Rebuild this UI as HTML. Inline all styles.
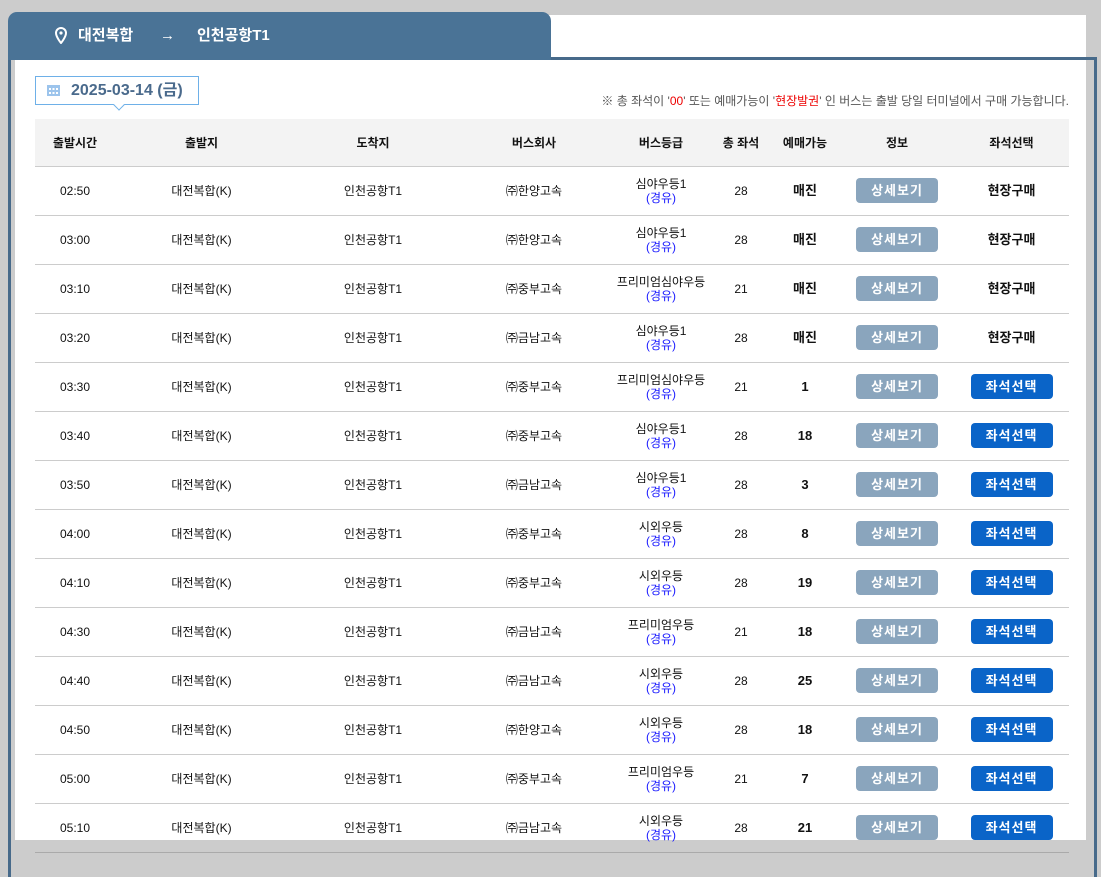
<!DOCTYPE html>
<html><head><meta charset="utf-8"><style>
*{margin:0;padding:0;box-sizing:border-box}
body{width:1101px;height:855px;background:#cccccc;position:relative;overflow:hidden;font-family:"Liberation Sans","Noto Sans CJK KR",sans-serif;color:#111}
.white{position:absolute;left:15px;top:15px;width:1071px;height:825px;background:#fff}
.frame{position:absolute;left:8px;top:57px;width:1089px;height:820px;border:3px solid #476a8a;border-bottom:none}
.tab{position:absolute;left:8px;top:12px;width:543px;height:48px;background:#4a7396;border-radius:9px 9px 0 0;color:#fff;font-weight:bold;font-size:15px}
.tab span{position:absolute;top:14px;line-height:20px}
.date{position:absolute;left:35px;top:76px;width:164px;height:29px;border:1px solid #6eb0e8;background:#fff;color:#4a6a8c;font-weight:bold;font-size:16px}
.date .t{position:absolute;left:35px;top:5px;line-height:18px}
.date:after{content:"";position:absolute;left:79px;bottom:-5px;width:7px;height:7px;background:#fff;border-right:1px solid #6eb0e8;border-bottom:1px solid #6eb0e8;transform:rotate(45deg)}
.note{position:absolute;right:32px;top:93px;font-size:12px;color:#555;line-height:16px}
.note b{color:#e00;font-weight:normal}
table{position:absolute;left:35px;top:119px;width:1034px;border-collapse:collapse;font-size:12px}
th{background:#f3f3f3;height:47px;font-weight:bold;border-bottom:1px solid #ccc}
td{height:49px;text-align:center;border-bottom:1px solid #ccc;line-height:14px}
td.b{font-weight:bold;font-size:13px}
.bl{color:#1a1aff}
.btn{display:inline-block;width:82px;height:25px;line-height:25px;border-radius:4px;color:#fff;font-size:13px;font-weight:bold;letter-spacing:1px}
.g{background:#8aa5bd}.s{background:#0a64c8}
</style></head><body>
<div class="white"></div>
<div class="frame"></div>
<div class="tab">
<svg style="position:absolute;left:47px;top:15px" width="12" height="17" viewBox="0 0 12 17"><path d="M6 1a5 5 0 0 0-5 5c0 4 5 10 5 10s5-6 5-10a5 5 0 0 0-5-5z" fill="none" stroke="#fff" stroke-width="2"/><circle cx="6" cy="6" r="1.6" fill="#fff"/></svg>
<span style="left:70px">대전복합</span>
<span style="left:152px">→</span>
<span style="left:189px">인천공항T1</span>
</div>
<div class="date">
<svg style="position:absolute;left:11px;top:7px" width="13" height="12" viewBox="0 0 13 12"><rect x="0" y="1" width="13" height="11" fill="#9cc4ec"/><g fill="#fff"><rect x="2" y="4" width="2" height="2"/><rect x="5.5" y="4" width="2" height="2"/><rect x="9" y="4" width="2" height="2"/><rect x="2" y="8" width="2" height="2"/><rect x="5.5" y="8" width="2" height="2"/><rect x="9" y="8" width="2" height="2"/></g></svg>
<span class="t">2025-03-14 (금)</span></div>
<div class="note">※ 총 좌석이 '<b>00</b>' 또는 예매가능이 '<b>현장발권</b>' 인 버스는 출발 당일 터미널에서 구매 가능합니다.</div>
<table>
<colgroup><col style="width:80px"><col style="width:173px"><col style="width:170px"><col style="width:152px"><col style="width:102px"><col style="width:58px"><col style="width:70px"><col style="width:114px"><col style="width:115px"></colgroup>
<tr><th>출발시간</th><th>출발지</th><th>도착지</th><th>버스회사</th><th>버스등급</th><th>총 좌석</th><th>예매가능</th><th>정보</th><th>좌석선택</th></tr>
<tr><td>02:50</td><td>대전복합(K)</td><td>인천공항T1</td><td>㈜한양고속</td><td>심야우등1<br><span class="bl">(경유)</span></td><td>28</td><td class="b">매진</td><td><span class="btn g">상세보기</span></td><td class="b">현장구매</td></tr>
<tr><td>03:00</td><td>대전복합(K)</td><td>인천공항T1</td><td>㈜한양고속</td><td>심야우등1<br><span class="bl">(경유)</span></td><td>28</td><td class="b">매진</td><td><span class="btn g">상세보기</span></td><td class="b">현장구매</td></tr>
<tr><td>03:10</td><td>대전복합(K)</td><td>인천공항T1</td><td>㈜중부고속</td><td>프리미엄심야우등<br><span class="bl">(경유)</span></td><td>21</td><td class="b">매진</td><td><span class="btn g">상세보기</span></td><td class="b">현장구매</td></tr>
<tr><td>03:20</td><td>대전복합(K)</td><td>인천공항T1</td><td>㈜금남고속</td><td>심야우등1<br><span class="bl">(경유)</span></td><td>28</td><td class="b">매진</td><td><span class="btn g">상세보기</span></td><td class="b">현장구매</td></tr>
<tr><td>03:30</td><td>대전복합(K)</td><td>인천공항T1</td><td>㈜중부고속</td><td>프리미엄심야우등<br><span class="bl">(경유)</span></td><td>21</td><td class="b">1</td><td><span class="btn g">상세보기</span></td><td><span class="btn s">좌석선택</span></td></tr>
<tr><td>03:40</td><td>대전복합(K)</td><td>인천공항T1</td><td>㈜중부고속</td><td>심야우등1<br><span class="bl">(경유)</span></td><td>28</td><td class="b">18</td><td><span class="btn g">상세보기</span></td><td><span class="btn s">좌석선택</span></td></tr>
<tr><td>03:50</td><td>대전복합(K)</td><td>인천공항T1</td><td>㈜금남고속</td><td>심야우등1<br><span class="bl">(경유)</span></td><td>28</td><td class="b">3</td><td><span class="btn g">상세보기</span></td><td><span class="btn s">좌석선택</span></td></tr>
<tr><td>04:00</td><td>대전복합(K)</td><td>인천공항T1</td><td>㈜중부고속</td><td>시외우등<br><span class="bl">(경유)</span></td><td>28</td><td class="b">8</td><td><span class="btn g">상세보기</span></td><td><span class="btn s">좌석선택</span></td></tr>
<tr><td>04:10</td><td>대전복합(K)</td><td>인천공항T1</td><td>㈜중부고속</td><td>시외우등<br><span class="bl">(경유)</span></td><td>28</td><td class="b">19</td><td><span class="btn g">상세보기</span></td><td><span class="btn s">좌석선택</span></td></tr>
<tr><td>04:30</td><td>대전복합(K)</td><td>인천공항T1</td><td>㈜금남고속</td><td>프리미엄우등<br><span class="bl">(경유)</span></td><td>21</td><td class="b">18</td><td><span class="btn g">상세보기</span></td><td><span class="btn s">좌석선택</span></td></tr>
<tr><td>04:40</td><td>대전복합(K)</td><td>인천공항T1</td><td>㈜금남고속</td><td>시외우등<br><span class="bl">(경유)</span></td><td>28</td><td class="b">25</td><td><span class="btn g">상세보기</span></td><td><span class="btn s">좌석선택</span></td></tr>
<tr><td>04:50</td><td>대전복합(K)</td><td>인천공항T1</td><td>㈜한양고속</td><td>시외우등<br><span class="bl">(경유)</span></td><td>28</td><td class="b">18</td><td><span class="btn g">상세보기</span></td><td><span class="btn s">좌석선택</span></td></tr>
<tr><td>05:00</td><td>대전복합(K)</td><td>인천공항T1</td><td>㈜중부고속</td><td>프리미엄우등<br><span class="bl">(경유)</span></td><td>21</td><td class="b">7</td><td><span class="btn g">상세보기</span></td><td><span class="btn s">좌석선택</span></td></tr>
<tr><td style="border-color:#aaa">05:10</td><td style="border-color:#aaa">대전복합(K)</td><td style="border-color:#aaa">인천공항T1</td><td style="border-color:#aaa">㈜금남고속</td><td style="border-color:#aaa">시외우등<br><span class="bl">(경유)</span></td><td style="border-color:#aaa">28</td><td class="b" style="border-color:#aaa">21</td><td style="border-color:#aaa"><span class="btn g">상세보기</span></td><td style="border-color:#aaa"><span class="btn s">좌석선택</span></td></tr>
</table>
</body></html>
